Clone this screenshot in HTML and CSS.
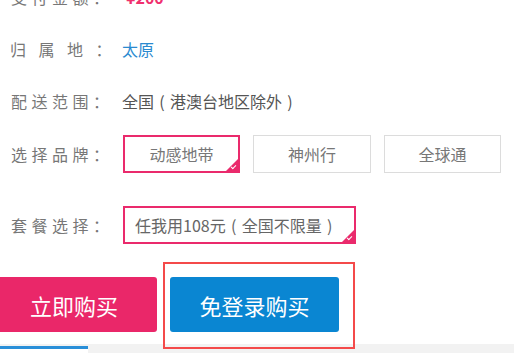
FILE: index.html
```html
<!DOCTYPE html>
<html lang="zh-CN">
<head>
<meta charset="utf-8">
<link rel="stylesheet" href="styles.css">
</head>
<body>
<div class="page">
  <div class="row text-row">
    <div class="label">支付金额：</div>
    <div class="value price">¥200</div>
  </div>
  <div class="row text-row">
    <div class="label wide">归属地：</div>
    <div class="value city">太原</div>
  </div>
  <div class="row text-row">
    <div class="label">配送范围：</div>
    <div class="value">全国<span class="paren">(</span>港澳台地区除外<span class="paren">)</span></div>
  </div>
  <div class="row brand-row">
    <div class="label">选择品牌：</div>
    <div class="options">
      <div class="opt checked">动感地带</div>
      <div class="opt">神州行</div>
      <div class="opt">全球通</div>
    </div>
  </div>
  <div class="row plan-row">
    <div class="label">套餐选择：</div>
    <div class="options">
      <div class="opt plan checked">任我用108元<span class="paren">(</span>全国不限量<span class="paren">)</span></div>
    </div>
  </div>
  <div class="buttons">
    <div class="btn buy">立即购买</div>
    <div class="btn quick">免登录购买<span class="highlight"></span></div>
  </div>
  <div class="strip"><div class="tab"></div></div>
</div>
</body>
</html>
```
FILE: styles.css
```css
html, body {
  margin: 0;
  padding: 0;
  background: #fff;
  overflow: hidden;
}
body {
  width: 514px;
  height: 353px;
  font-family: "Noto Sans CJK SC", "Noto Sans", sans-serif;
  font-size: 16px;
  color: #666;
}
.page {
  margin-top: -29px;
  display: flex;
  flex-direction: column;
}
.row {
  display: flex;
  align-items: center;
}
.text-row {
  height: 52px;
}
.label {
  width: 111px;
  padding-left: 11px;
  letter-spacing: 4.5px;
  color: #777;
  white-space: nowrap;
}
.label.wide {
  letter-spacing: 12.5px;
  padding-left: 10px;
  width: 112px;
}
.value {
  color: #555;
  white-space: nowrap;
}
.paren {
  display: inline-block;
  width: 16px;
  text-align: center;
}
.price {
  color: #f0306e;
  font-weight: bold;
  padding-left: 4px;
}
.city {
  color: #2a8ad0;
}
.brand-row {
  margin-top: 8px;
  height: 38px;
}
.plan-row {
  margin-top: 33px;
  height: 38px;
}
.options {
  display: flex;
  gap: 13px;
  margin-left: 1px;
}
.opt {
  position: relative;
  box-sizing: border-box;
  width: 118px;
  height: 38px;
  border: 1px solid #dcdcdc;
  display: flex;
  align-items: center;
  justify-content: center;
  color: #777;
  white-space: nowrap;
}
.opt:first-child {
  width: 117px;
}
.opt:last-child {
  width: 117px;
}
.opt.checked {
  border: 2px solid #ea2a6c;
}
.opt.checked::after {
  content: "";
  position: absolute;
  right: 0;
  bottom: 0;
  width: 0;
  height: 0;
  border-left: 12px solid transparent;
  border-bottom: 12px solid #ea2a6c;
}
.opt.checked::before {
  content: "";
  position: absolute;
  right: 2px;
  bottom: 3px;
  width: 4px;
  height: 2px;
  border-left: 1px solid #fff;
  border-bottom: 1px solid #fff;
  transform: rotate(-45deg);
  z-index: 1;
}
.opt.plan {
  width: 233px;
  justify-content: flex-start;
  padding-left: 10px;
  color: #666;
}
.buttons {
  display: flex;
  margin-top: 33px;
  gap: 13px;
}
.btn {
  height: 55px;
  border-radius: 3px;
  color: #fff;
  font-size: 22px;
  display: flex;
  align-items: center;
  justify-content: center;
  white-space: nowrap;
}
.buy {
  width: 166px;
  margin-left: -9px;
  background: #ea2769;
}
.quick {
  position: relative;
  width: 169px;
  background: #0a86d2;
}
.highlight {
  position: absolute;
  left: -7px;
  top: -15px;
  right: -16px;
  bottom: -17px;
  border: 2px solid #f44a4a;
}
.strip {
  margin-top: 12px;
  height: 9px;
  background: #f2f2f2;
  display: flex;
}
.tab {
  width: 88px;
  margin-top: 2px;
  background: #fff;
  border-top: 3px solid #2a8fd8;
}
```
